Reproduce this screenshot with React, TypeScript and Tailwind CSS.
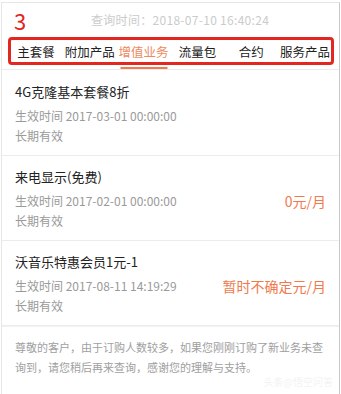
const tabs = ["主套餐", "附加产品", "增值业务", "流量包", "合约", "服务产品"];

const items = [
  { name: "4G克隆基本套餐8折", time: "2017-03-01 00:00:00", price: "" },
  { name: "来电显示(免费)", time: "2017-02-01 00:00:00", price: "0元/月" },
  { name: "沃音乐特惠会员1元-1", time: "2017-08-11 14:19:29", price: "暂时不确定元/月" },
];

function ServiceItem({ item, first }: { item: (typeof items)[number]; first?: boolean }) {
  return (
    <div className={`px-[13px] ${first ? "pt-[12px]" : "pt-[11px]"} pb-[9px] border-b border-[#ececec]`}>
      <div className="text-[13px] leading-[20px] text-[#222]">{item.name}</div>
      <div className="mt-[4px] flex items-center justify-between">
        <span className="text-[12px] leading-[20px] text-[#9a9a9a]">生效时间 {item.time}</span>
        {item.price && <span className="text-[14px] leading-[20px] text-[#f07a4c]">{item.price}</span>}
      </div>
      <div className="text-[12px] leading-[20px] text-[#9a9a9a]">长期有效</div>
    </div>
  );
}

export default function App() {
  return (
    <div
      className="w-[341px] h-[394px] bg-white overflow-hidden"
      style={{ fontFamily: '"Noto Sans CJK SC", "Noto Sans", sans-serif' }}
    >
      <div className="mt-[2px] ml-[1px] mr-[1px] h-[392px] border-t border-l border-r border-t-[#e6e6e6] border-l-[#e6e6e6] border-r-[#c8c8c8] relative">
        {/* header */}
        <div className="relative h-[34px] flex items-center pl-[89px]">
          <span className="absolute left-[12px] top-[4px] text-[22px] leading-[26px] text-[#e3261f]">3</span>
          <span className="text-[12px] tracking-[0.3px] text-[#cbcbcb]">查询时间：2018-07-10 16:40:24</span>
        </div>

        {/* tabs */}
        <div className="relative h-[33px] border-b border-[#ececec]">
          <div className="absolute left-[6px] top-0 w-[326px] h-[28px] border-[3px] border-[#e3261f] rounded-[4px]" />
          <div className="grid grid-cols-6 px-[7px] h-full">
            {tabs.map((t) => {
              const active = t === "增值业务";
              return (
                <div key={t} className="relative flex justify-center">
                  <span
                    className={`mt-[6px] text-[12.5px] leading-[18px] ${active ? "text-[#ee8a5e]" : "text-[#222]"}`}
                  >
                    {t}
                  </span>
                  {active && (
                    <div className="absolute bottom-0 left-1/2 -translate-x-1/2 w-[47px] h-[2px] bg-[#f07a4c]" />
                  )}
                </div>
              );
            })}
          </div>
        </div>

        {items.map((it, i) => (
          <ServiceItem key={it.name} item={it} first={i === 0} />
        ))}

        {/* footer note */}
        <div className="border-t border-[#f2f2f2] px-[13px] pt-[10px] text-[11px] leading-[20px] text-[#a0a0a0]">
          尊敬的客户，由于订购人数较多，如果您刚刚订购了新业务未查询到，请您稍后再来查询，感谢您的理解与支持。
        </div>
        <span className="absolute right-[6px] bottom-[5px] text-[10px] text-[#f3f3f3]">头条@悟空问答</span>
      </div>
    </div>
  );
}
